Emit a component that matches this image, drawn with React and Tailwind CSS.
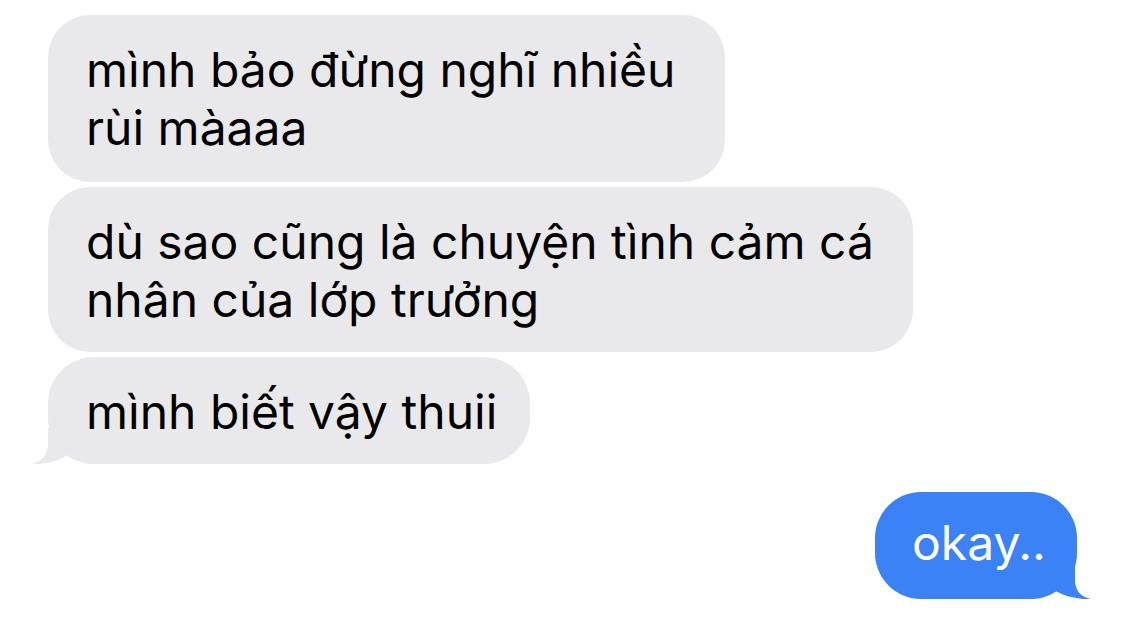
import React from "react";

function GrayTail() {
  return (
    <svg
      className="absolute left-[-16px] bottom-0"
      width="64"
      height="36"
      viewBox="0 0 64 36"
    >
      <path
        d="M16 0 L16 15 C16 27 10 33 0 36 C 14 36.5 28 33 38 25 C 44 32 50 36 64 36 L64 0 Z"
        fill="#e9e9eb"
      />
    </svg>
  );
}

function BlueTail() {
  return (
    <svg
      className="absolute right-[-14px] bottom-0"
      width="64"
      height="36"
      viewBox="0 0 64 36"
    >
      <path
        d="M48 0 L48 17 C48 28 54 34 64 36 C 50 36.5 36 33 25 26 C 20 32 14 36 0 36 L0 0 Z"
        fill="#3b82f6"
      />
    </svg>
  );
}

export default function App() {
  const font = { fontFamily: "Inter, 'Noto Sans', sans-serif" };
  return (
    <div
      className="w-full h-[620px] bg-white flex flex-col pt-[15px] overflow-hidden"
      style={font}
    >
      <div className="flex flex-col gap-[5px] pl-[48px]">
        <div className="w-[677px] rounded-[42px] bg-[#e9e9eb] pl-[38px] pt-[26px] pb-[25px] text-[48px] leading-[58px] text-black whitespace-nowrap">
          mình bảo đừng nghĩ nhiều
          <br />
          rùi màaaa
        </div>
        <div className="w-[865px] rounded-[42px] bg-[#e9e9eb] pl-[38px] pt-[26px] pb-[23px] text-[48px] leading-[58px] text-black whitespace-nowrap">
          dù sao cũng là chuyện tình cảm cá
          <br />
          nhân của lớp trưởng
        </div>
        <div className="relative w-[482px] rounded-[46px] bg-[#e9e9eb] pl-[38px] pt-[26px] pb-[23px] text-[48px] leading-[58px] text-black whitespace-nowrap">
          <GrayTail />
          <span className="relative">mình biết vậy thuii</span>
        </div>
      </div>
      <div className="flex justify-end pr-[48px] mt-[28px]">
        <div className="relative w-[202px] rounded-[46px] bg-[#3b82f6] pl-[37px] pt-[22px] pb-[27px] text-[48px] leading-[58px] text-white whitespace-nowrap">
          <BlueTail />
          <span className="relative">okay..</span>
        </div>
      </div>
    </div>
  );
}
